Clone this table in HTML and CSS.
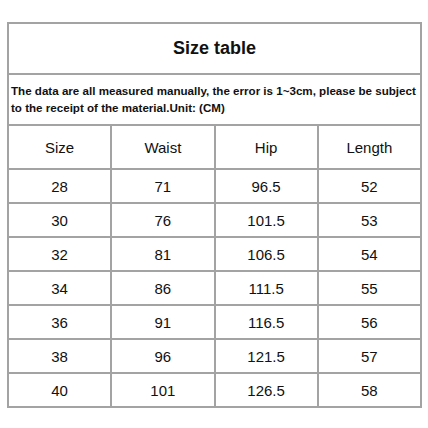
FILE: index.html
```html
<!DOCTYPE html>
<html>
<head>
<meta charset="utf-8">
<link rel="stylesheet" href="styles.css">
</head>
<body>
<table class="size-table">
  <tr class="title-row"><td colspan="4">Size table</td></tr>
  <tr class="note-row"><td colspan="4">The data are all measured manually, the error is 1~3cm, please be subject to the receipt of the material.Unit: (CM)</td></tr>
  <tr class="head-row"><td>Size</td><td>Waist</td><td>Hip</td><td>Length</td></tr>
  <tr><td>28</td><td>71</td><td>96.5</td><td>52</td></tr>
  <tr><td>30</td><td>76</td><td>101.5</td><td>53</td></tr>
  <tr><td>32</td><td>81</td><td>106.5</td><td>54</td></tr>
  <tr><td>34</td><td>86</td><td>111.5</td><td>55</td></tr>
  <tr><td>36</td><td>91</td><td>116.5</td><td>56</td></tr>
  <tr><td>38</td><td>96</td><td>121.5</td><td>57</td></tr>
  <tr><td>40</td><td>101</td><td>126.5</td><td>58</td></tr>
</table>
</body>
</html>
```
FILE: styles.css
```css
html, body {
  margin: 0;
  padding: 0;
  background: #fff;
}
body {
  padding: 22px 0 0 7px;
  font-family: "Liberation Sans", Arial, sans-serif;
  color: #111;
}
.size-table {
  border-collapse: collapse;
  width: 415px;
  table-layout: fixed;
}
.size-table td {
  border: 2px solid #a3a3a3;
  text-align: center;
  font-size: 15px;
  height: 34px;
  padding: 0;
  box-sizing: border-box;
}
.title-row td {
  height: 51px;
  font-size: 18px;
  font-weight: bold;
}
.note-row td {
  height: 51px;
  font-size: 11.6px;
  font-weight: bold;
  text-align: left;
  line-height: 17px;
  padding: 0 2px 2px 2px;
}
.head-row td {
  height: 44px;
}
```
